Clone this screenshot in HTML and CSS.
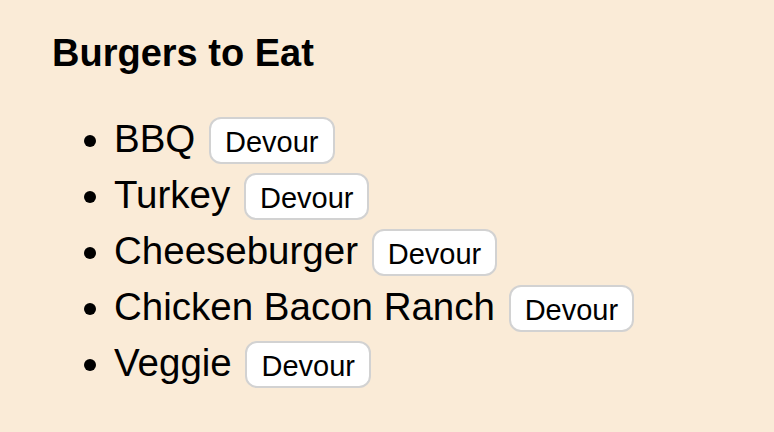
FILE: index.html
```html
<!DOCTYPE html>
<html lang="en">
<head>
<meta charset="utf-8">
<title>Burgers to Eat</title>
<link rel="stylesheet" href="styles.css">
</head>
<body>
<main class="page">
  <h2 class="title">Burgers to Eat</h2>
  <ul class="burgers">
    <li class="burger">BBQ <button class="devour">Devour</button></li>
    <li class="burger">Turkey <button class="devour">Devour</button></li>
    <li class="burger">Cheeseburger <button class="devour">Devour</button></li>
    <li class="burger">Chicken Bacon Ranch <button class="devour">Devour</button></li>
    <li class="burger">Veggie <button class="devour">Devour</button></li>
  </ul>
</main>
</body>
</html>
```
FILE: styles.css
```css
html, body {
  margin: 0;
  padding: 0;
  background: #faebd7;
}
body {
  font-family: "Liberation Sans", Arial, Helvetica, sans-serif;
  color: #000;
}
.page {
  padding: 31px 0 0 52px;
}
.title {
  margin: 0;
  font-size: 38px;
  line-height: 44px;
  font-weight: bold;
}
.burgers {
  margin: 36px 0 0 0;
  padding-left: 62px;
  font-size: 38.5px;
  line-height: 56px;
}
.burger {
  list-style: disc;
}
.devour {
  font-family: "Liberation Sans", Arial, Helvetica, sans-serif;
  font-size: 29px;
  line-height: 32px;
  color: #000;
  background: #fff;
  border: 2px solid #d2d2d2;
  border-radius: 12px;
  padding: 7px 14px 4px;
  margin: 0 0 0 3px;
  vertical-align: baseline;
}
```
